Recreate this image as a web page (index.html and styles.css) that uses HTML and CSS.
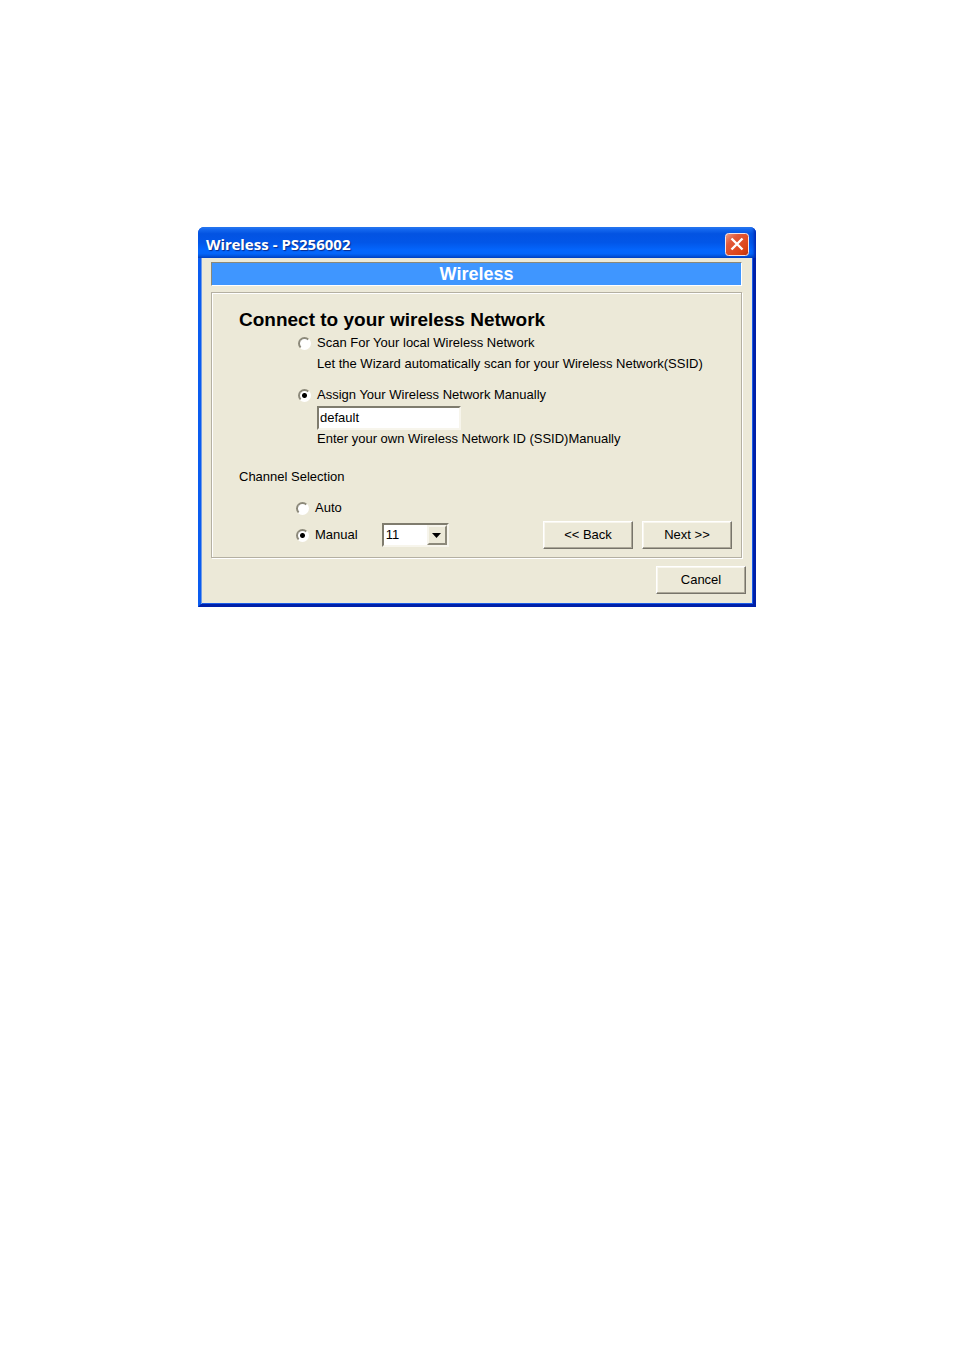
FILE: index.html
```html
<!DOCTYPE html>
<html lang="en">
<head>
    <meta charset="UTF-8">
    <meta name="viewport" content="width=device-width, initial-scale=1.0">
    <title>Wireless - PS256002</title>
    <link rel="stylesheet" href="styles.css">
</head>
<body>
    <div class="window">
        <div class="title-bar">
            <span class="title">Wireless - PS256002</span>
            <button type="button" class="close-button" aria-label="Close">
                <svg width="24" height="23" viewBox="0 0 24 23">
                    <defs>
                        <linearGradient id="close-red" x1="0" y1="0" x2="1" y2="1">
                            <stop offset="0" stop-color="#f0a08a"/>
                            <stop offset="0.3" stop-color="#e2593a"/>
                            <stop offset="0.75" stop-color="#dc4417"/>
                            <stop offset="1" stop-color="#b8300e"/>
                        </linearGradient>
                    </defs>
                    <rect x="0.5" y="0.5" width="23" height="22" rx="3" fill="url(#close-red)" stroke="#f4e4e8"/>
                    <path d="M6.5 5.5l11 11M17.5 5.5l-11 11" stroke="#fff" stroke-width="2.4"/>
                </svg>
            </button>
        </div>

        <form class="window-body">
            <h1 class="banner">Wireless</h1>

            <div class="panel">
                <h2>Connect to your wireless Network</h2>
                <div class="options">
                    <label class="option"><input type="radio" name="network"> Scan For Your local Wireless Network</label>
                    <p class="hint">Let the Wizard automatically scan for your Wireless Network(SSID)</p>
                    <label class="option manual-network"><input type="radio" name="network" checked> Assign Your Wireless Network Manually</label>
                    <input type="text" class="ssid" id="ssid" value="default" aria-labelledby="ssid-hint">
                    <p class="hint" id="ssid-hint">Enter your own Wireless Network ID (SSID)Manually</p>
                </div>

                <h3>Channel Selection</h3>
                <div class="channels">
                    <label class="option"><input type="radio" name="channel"> Auto</label>
                    <div class="channel-row">
                        <label class="option"><input type="radio" name="channel" checked> Manual</label>
                        <div class="select-box">
                            <select aria-label="Channel">
                                <option>1</option>
                                <option>6</option>
                                <option selected>11</option>
                            </select>
                            <span class="arrow">
                                <svg width="9" height="5" viewBox="0 0 9 5"><path d="M0 0h9L4.5 5z"/></svg>
                            </span>
                        </div>
                        <div class="nav-buttons">
                            <button type="button" class="button">&lt;&lt; Back</button>
                            <button type="button" class="button">Next &gt;&gt;</button>
                        </div>
                    </div>
                </div>
            </div>

            <div class="footer">
                <button type="button" class="button">Cancel</button>
            </div>
        </form>
    </div>
</body>
</html>
```

FILE: styles.css
```css
* {
    box-sizing: border-box;
}

body {
    margin: 0;
    padding: 227px 20px 20px;
    background-color: white;
    color: #000;
    font-family: "Liberation Sans", Arial, sans-serif;
    font-size: 13px;
    line-height: 16px;
}

h1, h2, h3, p {
    margin: 0;
}

.window {
    max-width: 558px;
    margin: 0 auto;
    background-color: #0a4fe0;
    border-radius: 6px 6px 0 0;
    overflow: hidden;
}

.title-bar {
    display: flex;
    align-items: center;
    justify-content: space-between;
    height: 31px;
    padding: 3px 7px 0 8px;
    background: linear-gradient(#2f86f8 0%, #1467ee 8%, #0353e2 22%, #0256e8 50%, #0466fd 75%, #0465fa 86%, #0246c4 100%);
    box-shadow: inset -3px 0 3px -1px #0028b4;
}

.title {
    color: white;
    font-family: "Noto Sans", "Open Sans", sans-serif;
    font-size: 15px;
    font-weight: bold;
    text-shadow: 1px 1px 1px #0a2a8a;
}

.close-button {
    display: flex;
    padding: 0;
    border: none;
    background: none;
}

.window-body {
    margin: 0;
    padding: 4px 7px 10px 10px;
    border: solid;
    border-width: 0 3px 3px;
    border-color: #0a5cf0 #0020a8 #0020a8 #0a5cf0;
    background-color: #ece9d8;
    box-shadow: inset 1px 0 #6f9ce8, inset -1px -1px #1a5ce8;
}

.banner {
    height: 24px;
    margin-right: 4px;
    border: 1px solid;
    border-color: #8a8878 #fff #fff #8a8878;
    background-color: #3f96ff;
    color: white;
    font-size: 18px;
    line-height: 23px;
    text-align: center;
}

.panel {
    margin: 6px 4px 0 0;
    padding: 17px 9px 8px 27px;
    border: 1px solid #b4b0a2;
    box-shadow: inset 1px 1px #fff, 1px 1px #fff;
}

.panel h2 {
    font-size: 19px;
    line-height: 20px;
}

.panel h3 {
    margin-top: 22px;
    font-size: 13px;
    font-weight: normal;
}

.options {
    display: flex;
    flex-direction: column;
    align-items: flex-start;
    padding: 5px 0 0 59px;
}

.option {
    display: flex;
    align-items: center;
    gap: 6px;
}

.option input {
    appearance: none;
    width: 13px;
    height: 13px;
    margin: 0;
    border: 2px solid;
    border-color: #8c897a #fff #fff #8c897a;
    border-radius: 50%;
    background-color: white;
}

.option input:checked {
    background-image: radial-gradient(circle, #000 0, #000 2px, transparent 3px);
}

.hint {
    margin: 5px 0 0 19px;
}

.manual-network {
    margin-top: 15px;
}

.ssid {
    width: 144px;
    height: 24px;
    margin: 3px 0 0 19px;
    padding: 0 1px 2px;
    border: 2px solid;
    border-color: #7f7c6e #f7f5ec #f7f5ec #7f7c6e;
    background-color: white;
    font: inherit;
}

.ssid + .hint {
    margin-top: 1px;
}

.channels {
    padding: 15px 0 0 57px;
}

.channel-row {
    display: flex;
    align-items: center;
    margin-top: 5px;
}

.select-box {
    display: flex;
    width: 67px;
    height: 24px;
    margin-left: 24px;
    border: 2px solid;
    border-color: #7f7c6e #f7f5ec #f7f5ec #7f7c6e;
    background-color: white;
    position: relative;
}

.select-box select {
    appearance: none;
    width: 100%;
    padding: 0 2px;
    border: none;
    background: none;
    color: #000;
    font: inherit;
}

/* drawn over the select, lets clicks through */
.arrow {
    display: flex;
    align-items: center;
    justify-content: center;
    position: absolute;
    top: 0;
    right: 0;
    bottom: 0;
    width: 20px;
    border: 2px solid;
    border-color: #f7f5ec #8c897a #8c897a #f7f5ec;
    background-color: #ece9d8;
    pointer-events: none;
}

.nav-buttons {
    display: flex;
    gap: 9px;
    margin-left: auto;
}

.button {
    width: 90px;
    height: 28px;
    padding: 0;
    border: 1px solid;
    border-color: #fff #77746a #77746a #fff;
    background-color: #ece9d8;
    box-shadow: inset -1px -1px #aca899, inset 1px 1px #f8f6ee;
    color: #000;
    font: inherit;
}

.footer {
    display: flex;
    justify-content: flex-end;
    margin-top: 8px;
}
```
